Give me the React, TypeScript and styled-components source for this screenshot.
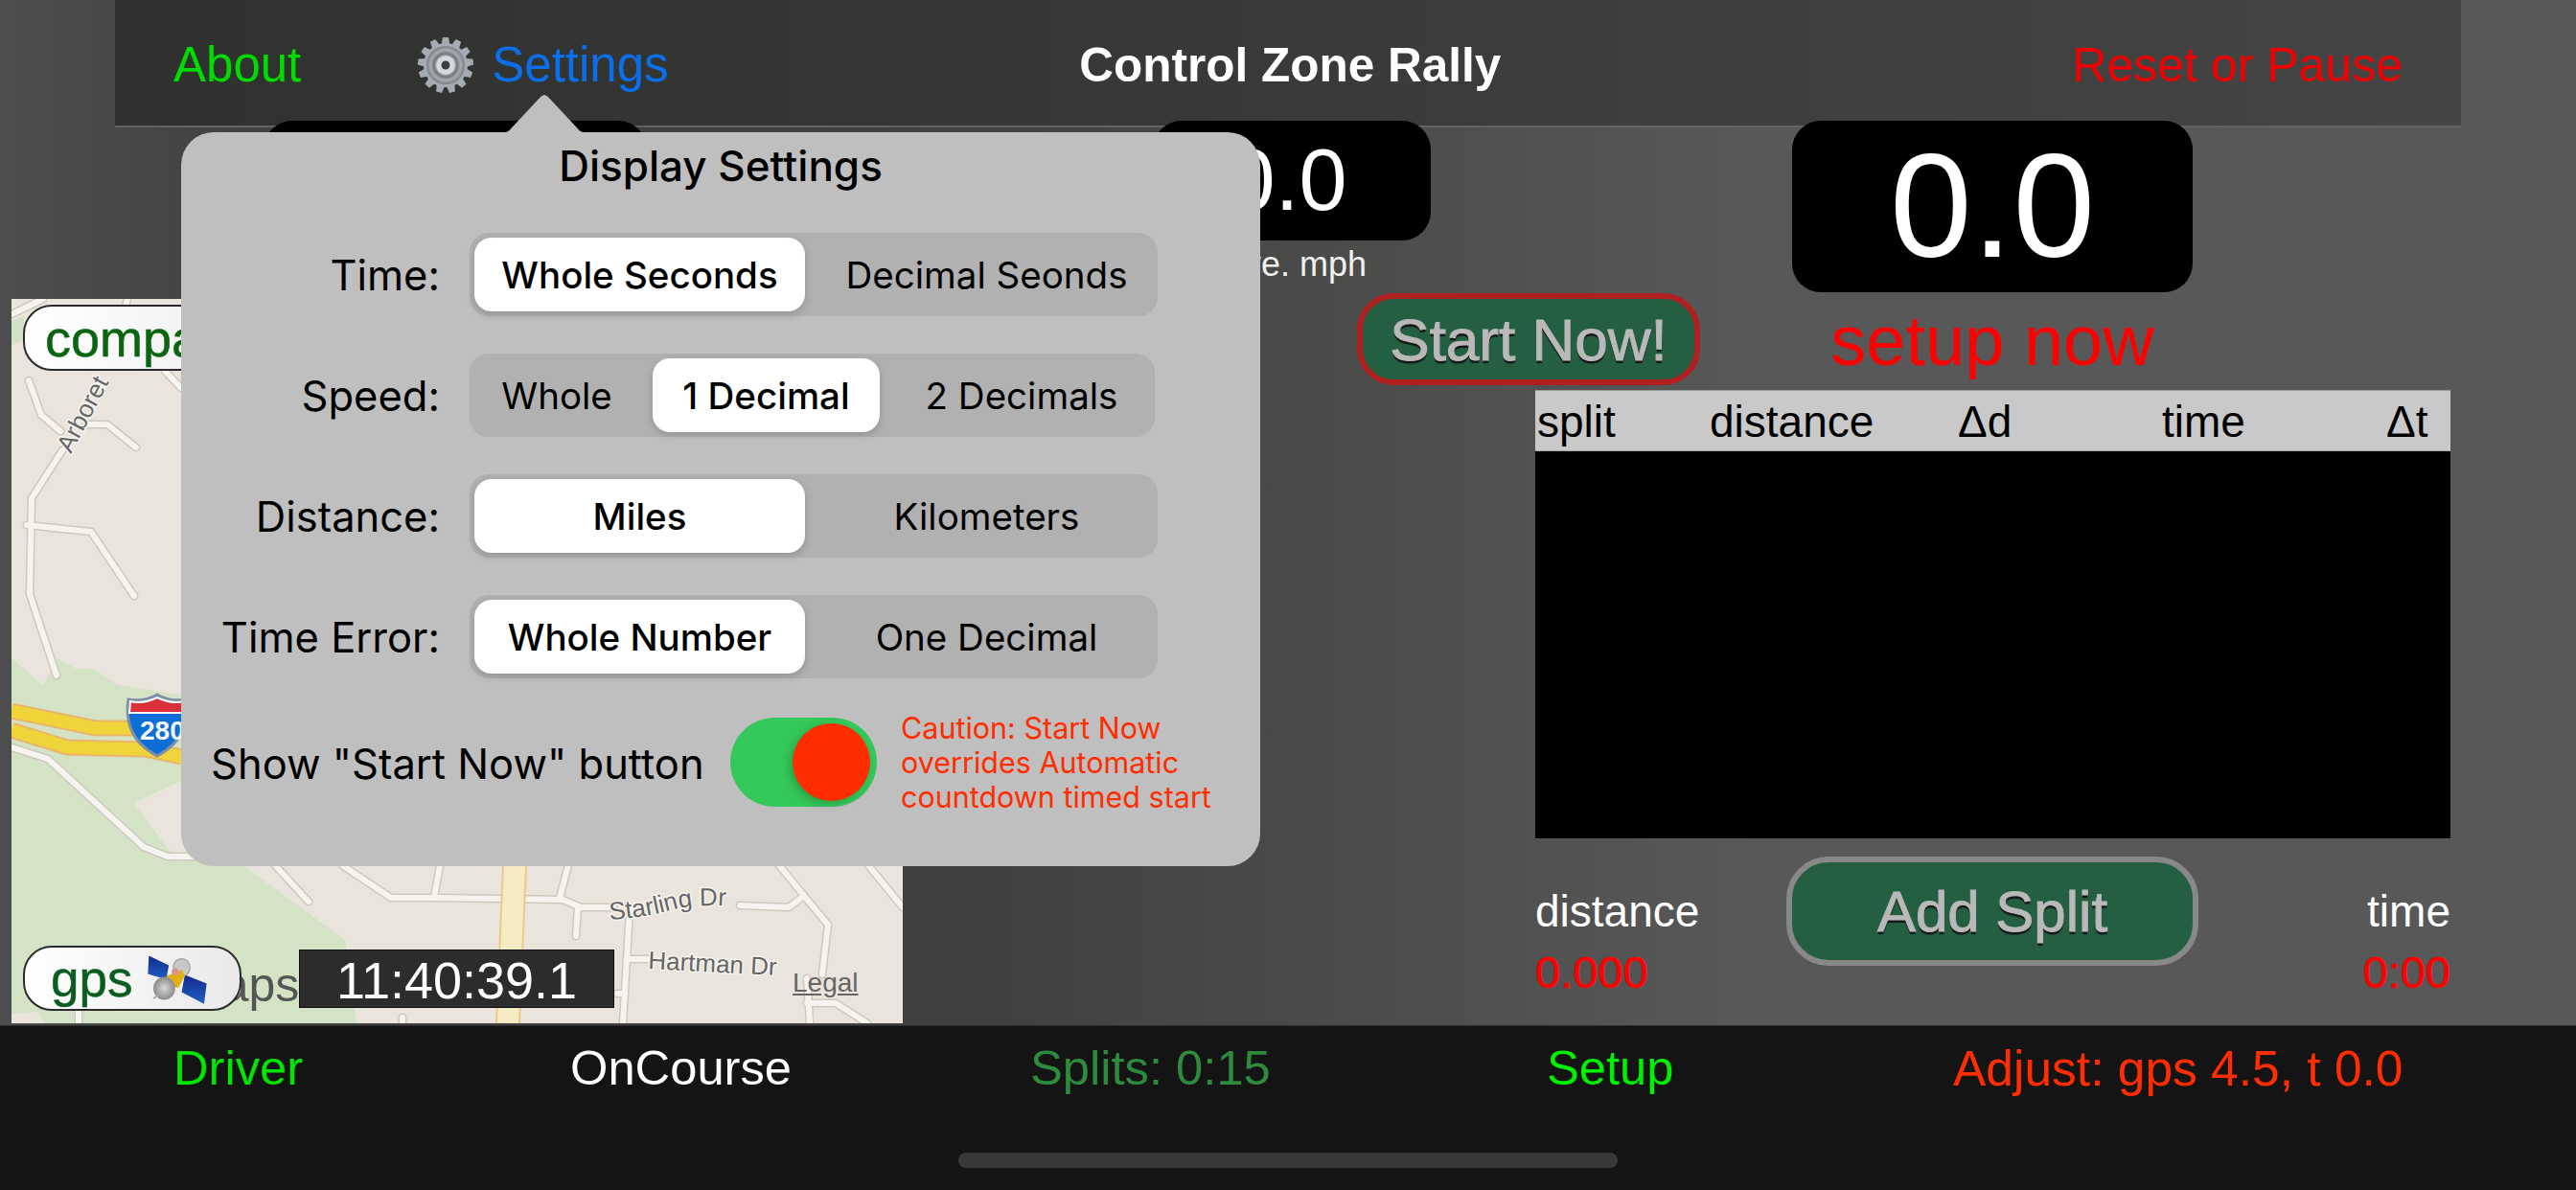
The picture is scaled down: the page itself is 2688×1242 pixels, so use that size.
import React from 'react';
import styled, { createGlobalStyle } from 'styled-components';

const GlobalStyle = createGlobalStyle`
  html, body {
    margin: 0;
    padding: 0;
    background: #4a4a4a;
  }
`;

const Page = styled.div`
  position: relative;
  width: 2688px;
  height: 1242px;
  overflow: hidden;
  display: flex;
  flex-direction: column;
  font-family: 'Liberation Sans', Arial, sans-serif;
  background: linear-gradient(90deg, #4e4e4e 0%, #404040 10%, #40403e 38%, #585858 68%, #585858 100%);
`;

const NavBar = styled.header`
  flex: none;
  box-sizing: border-box;
  height: 133px;
  margin: 0 120px;
  padding: 4px 61px 0;
  display: flex;
  align-items: center;
  font-size: 51px;
  background: linear-gradient(90deg, #2f312f 0%, #373836 40%, #454545 100%);
  border-bottom: 2px solid #636363;
`;

const NavLink = styled.span<{ $color: string }>`
  color: ${p => p.$color};
  white-space: nowrap;
`;

const SettingsLink = styled.div`
  display: flex;
  align-items: center;
  gap: 18px;
  margin-left: 121px;
  width: 691px;
`;

const NavTitle = styled.span`
  color: #fff;
  font-size: 49.5px;
  font-weight: 700;
  white-space: nowrap;
`;

const NavRight = styled(NavLink)`
  margin-left: auto;
  font-size: 50px;
`;

const Main = styled.main`
  flex: none;
  height: 944px;
  margin-top: -7px;
  display: flex;
  position: relative;
`;

const LeftColumn = styled.section`
  flex: none;
  width: 930px;
  margin-left: 12px;
  display: flex;
  flex-direction: column;
`;

const SpeedBox = styled.div<{ $w: number; $h: number; $size: number }>`
  flex: none;
  box-sizing: border-box;
  width: ${p => p.$w}px;
  height: ${p => p.$h}px;
  background: #000;
  border-radius: 30px;
  color: #fff;
  font-size: ${p => p.$size}px;
  display: flex;
  align-items: center;
  justify-content: center;
`;

const BehindBox = styled(SpeedBox)`
  margin: 0 0 16px 263px;
`;

const MidBox = styled(SpeedBox)`
  padding-right: 10px;
`;

const MapFrame = styled.div`
  position: relative;
  width: 930px;
  height: 756px;
  overflow: hidden;
  background: #ebe6dc;
`;

const MapArt = styled.svg`
  display: block;
`;

const MapPill = styled.div<{ $top: number; $w: number; $h: number; $color: string; $pad: number; $size: number }>`
  position: absolute;
  left: 12px;
  top: ${p => p.$top}px;
  box-sizing: border-box;
  width: ${p => p.$w}px;
  height: ${p => p.$h}px;
  padding-left: ${p => p.$pad}px;
  display: flex;
  align-items: center;
  border: 2px solid #2a2a2a;
  border-radius: 30px;
  background: linear-gradient(90deg, #fff 0%, #e9e9e9 100%);
  color: ${p => p.$color};
  font-size: ${p => p.$size}px;
  -webkit-text-stroke: 0.5px ${p => p.$color};
  white-space: nowrap;
`;

const MapsMark = styled.span`
  position: absolute;
  left: 178px;
  top: 687px;
  font-size: 50px;
  color: #555;
`;

const ClockBox = styled.div`
  position: absolute;
  left: 300px;
  top: 679px;
  box-sizing: border-box;
  width: 329px;
  height: 61px;
  padding-top: 2px;
  display: flex;
  align-items: center;
  justify-content: center;
  background: #2c2c2c;
  border: 1px solid #111;
  color: #fff;
  font-size: 54px;
`;

const LegalLink = styled.span`
  position: absolute;
  left: 815px;
  top: 698px;
  font-size: 28px;
  color: #666;
  text-decoration: underline;
`;

const RightColumn = styled.section`
  flex: 1;
  display: flex;
  flex-direction: column;
`;

const TopRow = styled.div`
  flex: none;
  height: 281px;
  padding-left: 261px;
  display: flex;
  gap: 96px;
`;

const MidBlock = styled.div`
  width: 571px;
  display: flex;
  flex-direction: column;
`;

const MidCaption = styled.div`
  width: 290px;
  height: 55px;
  line-height: 50px;
  padding-left: 4px;
  text-align: center;
  font-size: 36px;
  color: #f0f0f0;
`;

const ActionButton = styled.button<{ $border: string; $w: number; $h: number; $size: number; $radius: number }>`
  flex: none;
  box-sizing: border-box;
  width: ${p => p.$w}px;
  height: ${p => p.$h}px;
  padding: 0;
  background: #245f42;
  border: 6px solid ${p => p.$border};
  border-radius: ${p => p.$radius}px;
  color: #b9b9b9;
  font-family: inherit;
  font-size: ${p => p.$size}px;
  -webkit-text-stroke: 1px #b9b9b9;
  text-shadow: 0 3px 1px #161616;
`;

const StartNow = styled(ActionButton)`
  align-self: flex-end;
`;

const GoalBlock = styled.div`
  width: 418px;
  display: flex;
  flex-direction: column;
  align-items: center;
`;

const GoalStatus = styled.div`
  height: 102px;
  line-height: 102px;
  font-size: 74px;
  color: #f00;
  white-space: nowrap;
`;

const SplitArea = styled.div`
  width: 955px;
  margin-left: 660px;
`;

const SplitTable = styled.div`
  height: 468px;
  background: #000;
`;

const SplitHeader = styled.div`
  box-sizing: border-box;
  height: 64px;
  padding: 2px 0 0 2px;
  display: grid;
  grid-template-columns: 180px 259px 213px 234px 1fr;
  align-items: center;
  background: #c9c9c9;
  border-top: 1px solid #9a9a9a;
  border-bottom: 1px solid #aaa;
  font-size: 46px;
  color: #000;
`;

const SplitFooter = styled.div`
  margin-top: 19px;
  display: grid;
  grid-template-columns: 262px 430px 1fr;
`;

const Stat = styled.div<{ $right?: boolean }>`
  padding-top: 28px;
  text-align: ${p => (p.$right ? 'right' : 'left')};
`;

const StatLabel = styled.div`
  height: 65px;
  line-height: 58px;
  font-size: 46px;
  color: #fff;
`;

const StatValue = styled.div`
  line-height: 56px;
  font-size: 47px;
  color: #f00;
  -webkit-text-stroke: 0.6px #f00;
`;

const TabBar = styled.footer`
  position: relative;
  flex: 1;
  box-sizing: border-box;
  padding: 14px 0 0 181px;
  display: grid;
  grid-template-columns: 414px 480px 539px 424px 1fr;
  align-content: start;
  line-height: 60px;
  font-size: 50.7px;
  background: #141414;
  border-top: 1px solid #2a2a2a;
`;

const AdjustLink = styled(NavLink)`
  font-size: 51.5px;
`;

const HomeIndicator = styled.div`
  position: absolute;
  left: 1000px;
  top: 132px;
  width: 688px;
  height: 16px;
  border-radius: 8px;
  background: #383838;
`;

const Popover = styled.div`
  position: absolute;
  left: 189px;
  top: 138px;
  box-sizing: border-box;
  width: 1126px;
  height: 766px;
  display: flex;
  flex-direction: column;
  background: #bfbfbf;
  border-radius: 34px;
  font-family: Inter, 'Liberation Sans', sans-serif;
  color: #000;

  &::before {
    content: '';
    position: absolute;
    left: 337px;
    top: -39px;
    width: 84px;
    height: 40px;
    background: #bfbfbf;
    clip-path: polygon(0 100%, 6% 94%, 46% 4%, 50% 0, 54% 4%, 94% 94%, 100% 100%);
  }
`;

const PopoverTitle = styled.h2`
  margin: 0 0 35px;
  height: 70px;
  line-height: 70px;
  text-align: center;
  font-size: 44px;
  font-weight: 500;
`;

const SettingRows = styled.div`
  display: flex;
  flex-direction: column;
  gap: 39px;
`;

const SettingRow = styled.div`
  display: grid;
  grid-template-columns: 270px 1fr;
  column-gap: 31px;
  align-items: center;
`;

const SettingLabel = styled.span`
  text-align: right;
  font-size: 43.5px;
  white-space: nowrap;
`;

const Segmented = styled.div<{ $columns: string; $w: number }>`
  box-sizing: border-box;
  width: ${p => p.$w}px;
  height: 87px;
  padding: 5px;
  display: grid;
  grid-template-columns: ${p => p.$columns};
  background: #b1b1b1;
  border-radius: 20px;
`;

const Segment = styled.div<{ $active?: boolean; $nudge?: number }>`
  box-sizing: border-box;
  display: flex;
  align-items: center;
  justify-content: center;
  padding-left: ${p => Math.max(p.$nudge ?? 0, 0) * 2}px;
  padding-right: ${p => Math.max(-(p.$nudge ?? 0), 0) * 2}px;
  font-size: 38.5px;
  white-space: nowrap;
  border-radius: 18px;
  font-weight: ${p => (p.$active ? 500 : 400)};
  background: ${p => (p.$active ? '#fff' : 'transparent')};
  box-shadow: ${p => (p.$active ? '0 3px 8px rgba(0,0,0,0.18)' : 'none')};
`;

const ToggleRow = styled.div`
  margin-top: 41px;
  padding-left: 31px;
  height: 93px;
  display: flex;
  align-items: center;
`;

const ToggleLabel = styled.span`
  width: 542px;
  padding-top: 3px;
  font-size: 43.5px;
  white-space: nowrap;
`;

const Switch = styled.div`
  flex: none;
  position: relative;
  width: 153px;
  height: 93px;
  background: #34c759;
  border-radius: 47px;
`;

const SwitchKnob = styled.div`
  position: absolute;
  right: 7px;
  top: 6px;
  width: 81px;
  height: 81px;
  border-radius: 50%;
  background: #ff2d00;
  box-shadow: -3px 3px 8px rgba(0, 0, 0, 0.2);
`;

const Caution = styled.div`
  margin-left: 25px;
  font-size: 30.5px;
  line-height: 36px;
  color: #ff2d00;
  white-space: pre-line;
`;

const GearIcon = () => {
  const teeth = Array.from({ length: 13 }, (_, i) => (i * 360) / 13);
  return (
    <svg width="60" height="60" viewBox="0 0 60 60">
      <defs>
        <radialGradient id="gearRing">
          <stop offset="0.45" stopColor="#c9ccd0" />
          <stop offset="0.6" stopColor="#6f7276" />
          <stop offset="0.78" stopColor="#a9acaf" />
          <stop offset="1" stopColor="#7b7e82" />
        </radialGradient>
      </defs>
      {teeth.map(a => (
        <path key={a} d="M27 1 L33 1 L35 12 L25 12 Z" fill="#a4abb2" transform={`rotate(${a} 30 30)`} />
      ))}
      <circle cx="30" cy="30" r="23" fill="#a4abb2" />
      <circle cx="30" cy="30" r="20" fill="url(#gearRing)" />
      <circle cx="30" cy="30" r="9.5" fill="#d6d8da" />
      <circle cx="30" cy="30" r="4.5" fill="#3c3d3d" />
    </svg>
  );
};

const SatelliteIcon = () => (
  <svg width="67" height="57" viewBox="25 25 200 170" style={{ flex: 'none', marginLeft: 13 }}>
    <defs>
      <linearGradient id="panel" x1="0" y1="0" x2="0" y2="1">
        <stop offset="0" stopColor="#14288c" />
        <stop offset="1" stopColor="#1f5fc4" />
      </linearGradient>
      <radialGradient id="dish">
        <stop offset="0" stopColor="#d8d8d8" />
        <stop offset="1" stopColor="#8a8a8a" />
      </radialGradient>
    </defs>
    <polygon points="38,38 100,68 92,112 35,95" fill="url(#panel)" />
    <polygon points="150,98 218,125 210,188 140,152" fill="url(#panel)" />
    <ellipse cx="140" cy="75" rx="26" ry="28" fill="#c8c8c8" stroke="#999" strokeWidth="3" />
    <polygon points="92,102 140,82 150,100 130,138 112,134" fill="#e2b012" />
    <circle cx="120" cy="88" r="11" fill="#d89090" />
    <ellipse cx="86" cy="140" rx="34" ry="36" fill="url(#dish)" />
    <line x1="68" y1="160" x2="52" y2="172" stroke="#aaa" strokeWidth="6" />
  </svg>
);

const roads = [
  'M30 397 L43 433 L63 450',
  'M65 470 L33 520 L31 620 L59 705',
  'M28 548 L95 555 L140 622',
  'M90 443 L112 443 L142 467',
  'M12 328 L45 312',
  'M133 312 L131 320',
  'M172 387 L189 405',
  'M12 780 L50 792 L150 884 L175 894 L210 894',
  'M357 903 L408 937 L453 937 L587 939 L606 947 L640 947',
  'M772 945 L823 947 L839 935 L864 965 L858 1017',
  'M459 903 L453 937',
  'M593 903 L584 937',
  'M813 903 L839 935',
  'M906 903 L942 947',
  'M603 947 L601 977',
  'M657 950 L650 1068',
  'M287 903 L322 941',
  'M657 1001 L676 1001',
  'M644 1037 L652 1037',
  'M842 1021 L845 1068',
  'M842 1047 L872 1047 L905 1068',
  'M82 1040 L82 1068',
  'M420 1062 L420 1068',
];

const StreetMap = () => (
  <MapArt width="930" height="756" viewBox="12 312 930 756">
    <defs>
      <path id="starlingPath" d="M636 960 Q670 958 700 950 T775 947" />
      <path id="arboretumPath" d="M74 474 L128 372" />
    </defs>
    <rect x="12" y="312" width="930" height="756" fill="#e9e5dc" />
    <path d="M12 335 L25 330 L25 355 L12 360 Z" fill="#d3e2c5" />
    <path
      d="M12 687 L45 715 L60 687 L80 698 L97 698 L123 715 L189 725 L255 904 L360 981 L365 1005 L372 1068 L12 1068 Z"
      fill="#d4e3c6"
    />
    <path d="M140 838 L191 814 L230 880 L189 900 L175 885 Z" fill="#e9e5dc" />
    <path d="M255 904 L189 725 L300 725 L300 904 Z" fill="#d4e3c6" />
    <path d="M12 1058 L40 1056 L46 1068 L12 1068 Z" fill="#e9e5dc" />
    {['M12 742 L100 760 L189 760', 'M12 762 L70 780 L150 782 L190 790'].map(d => (
      <g key={d} fill="none">
        <path d={d} stroke="#eab56a" strokeWidth="17" />
        <path d={d} stroke="#f0d53a" strokeWidth="13" />
      </g>
    ))}
    <g fill="none" strokeLinecap="round" strokeLinejoin="round">
      {roads.map(d => (
        <path key={d} d={d} stroke="#cfc9bd" strokeWidth="9" />
      ))}
      {roads.map(d => (
        <path key={d + 'x'} d={d} stroke="#f6f4ef" strokeWidth="6" />
      ))}
      <path d="M537 903 L530 1068" stroke="#ecc98a" strokeWidth="26" strokeLinecap="butt" />
      <path d="M537 903 L530 1068" stroke="#f5ebc4" strokeWidth="22" strokeLinecap="butt" />
    </g>
    <path
      d="M134 730 Q150 733 164 725 Q178 733 194 730 Q200 770 164 789 Q128 770 134 730 Z"
      fill="#0d6fd6"
      stroke="#7f8fa6"
      strokeWidth="3"
    />
    <path d="M136 732 Q150 735 164 728 Q178 735 192 732 L193 744 L135 744 Z" fill="#d9303a" stroke="#fff" strokeWidth="2" />
    <text x="146" y="772" fontFamily="Liberation Sans" fontWeight="700" fontSize="28" fill="#f4f7fb">280</text>
    <g fontFamily="Liberation Sans" fontSize="26" fill="#666" stroke="#f6f4ef" strokeWidth="3" paintOrder="stroke">
      <text>
        <textPath href="#arboretumPath">Arboret</textPath>
      </text>
      <text>
        <textPath href="#starlingPath">Starling Dr</textPath>
      </text>
      <text transform="rotate(3 676 1011)" x="676" y="1011">Hartman Dr</text>
    </g>
  </MapArt>
);

const App: React.FC = () => {
  return (
    <Page>
      <GlobalStyle />
      <NavBar>
        <NavLink $color="#00dc00">About</NavLink>
        <SettingsLink>
          <GearIcon />
          <NavLink $color="#0a6fe8">Settings</NavLink>
        </SettingsLink>
        <NavTitle>Control Zone Rally</NavTitle>
        <NavRight $color="#f00000">Reset or Pause</NavRight>
      </NavBar>

      <Main>
        <LeftColumn>
          <BehindBox $w={400} $h={170} $size={90}>0.0</BehindBox>
          <MapFrame>
            <StreetMap />
            <MapsMark>Maps</MapsMark>
            <MapPill $top={6} $w={330} $h={69} $color="#0b6410" $pad={21} $size={54}>compass</MapPill>
            <MapPill $top={675} $w={228} $h={68} $color="#0b5c20" $pad={27} $size={53}>
              gps
              <SatelliteIcon />
            </MapPill>
            <ClockBox>11:40:39.1</ClockBox>
            <LegalLink>Legal</LegalLink>
          </MapFrame>
        </LeftColumn>

        <RightColumn>
          <TopRow>
            <MidBlock>
              <MidBox $w={290} $h={125} $size={90}>0.0</MidBox>
              <MidCaption>ave. mph</MidCaption>
              <StartNow $border="#b02020" $w={358} $h={96} $size={62} $radius={38}>Start Now!</StartNow>
            </MidBlock>
            <GoalBlock>
              <SpeedBox $w={418} $h={179} $size={154}>0.0</SpeedBox>
              <GoalStatus>setup now</GoalStatus>
            </GoalBlock>
          </TopRow>

          <SplitArea>
            <SplitTable>
              <SplitHeader>
                <span>split</span>
                <span>distance</span>
                <span>Δd</span>
                <span>time</span>
                <span>Δt</span>
              </SplitHeader>
            </SplitTable>
            <SplitFooter>
              <Stat>
                <StatLabel>distance</StatLabel>
                <StatValue>0.000</StatValue>
              </Stat>
              <ActionButton $border="#888888" $w={430} $h={114} $size={60} $radius={44}>Add Split</ActionButton>
              <Stat $right>
                <StatLabel>time</StatLabel>
                <StatValue>0:00</StatValue>
              </Stat>
            </SplitFooter>
          </SplitArea>
        </RightColumn>
      </Main>

      <TabBar>
        <NavLink $color="#00e600">Driver</NavLink>
        <NavLink $color="#ffffff">OnCourse</NavLink>
        <NavLink $color="#2e8b3e">Splits: 0:15</NavLink>
        <NavLink $color="#00f000">Setup</NavLink>
        <AdjustLink $color="#ff2d00">Adjust: gps 4.5, t 0.0</AdjustLink>
        <HomeIndicator />
      </TabBar>

      <Popover>
        <PopoverTitle>Display Settings</PopoverTitle>
        <SettingRows>
          <SettingRow>
            <SettingLabel>Time:</SettingLabel>
            <Segmented $columns="345px 1fr" $w={718}>
              <Segment $active>Whole Seconds</Segment>
              <Segment $nudge={8}>Decimal Seonds</Segment>
            </Segmented>
          </SettingRow>
          <SettingRow>
            <SettingLabel>Speed:</SettingLabel>
            <Segmented $columns="186px 237px 1fr" $w={715}>
              <Segment $nudge={-7}>Whole</Segment>
              <Segment $active>1 Decimal</Segment>
              <Segment $nudge={7}>2 Decimals</Segment>
            </Segmented>
          </SettingRow>
          <SettingRow>
            <SettingLabel>Distance:</SettingLabel>
            <Segmented $columns="345px 1fr" $w={718}>
              <Segment $active>Miles</Segment>
              <Segment $nudge={8}>Kilometers</Segment>
            </Segmented>
          </SettingRow>
          <SettingRow>
            <SettingLabel>Time Error:</SettingLabel>
            <Segmented $columns="345px 1fr" $w={718}>
              <Segment $active>Whole Number</Segment>
              <Segment $nudge={8}>One Decimal</Segment>
            </Segmented>
          </SettingRow>
        </SettingRows>
        <ToggleRow>
          <ToggleLabel>Show "Start Now" button</ToggleLabel>
          <Switch>
            <SwitchKnob />
          </Switch>
          <Caution>{'Caution: Start Now\noverrides Automatic\ncountdown timed start'}</Caution>
        </ToggleRow>
      </Popover>
    </Page>
  );
};

export default App;
